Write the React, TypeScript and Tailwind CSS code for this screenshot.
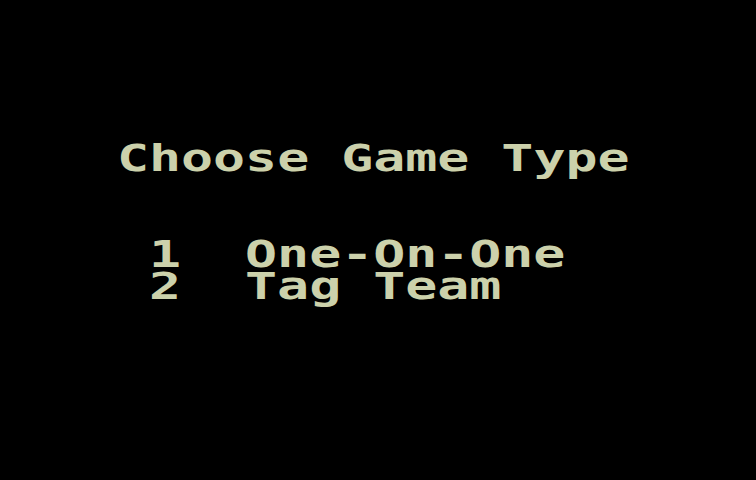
const ink = "text-[#ccd1ab]";

// blocky console text; mono glyphs stretched to the 32px cell pitch
function Rows({ children }: { children: string }) {
  return (
    <div
      className={`origin-left scale-x-[1.4] whitespace-pre text-[38px] leading-8 font-bold ${ink}`}
      style={{ fontFamily: '"DejaVu Sans Mono", "Liberation Mono", monospace' }}
    >
      {children}
    </div>
  );
}

export default function App() {
  return (
    <div className="h-[480px] w-[756px] overflow-hidden bg-black">
      <div className="flex flex-col pt-[142px] pl-[117px]">
        <Rows>Choose Game Type</Rows>
        <div className="mt-16 pl-8">
          <Rows>{"1  One-On-One\n2  Tag Team"}</Rows>
        </div>
      </div>
    </div>
  );
}
